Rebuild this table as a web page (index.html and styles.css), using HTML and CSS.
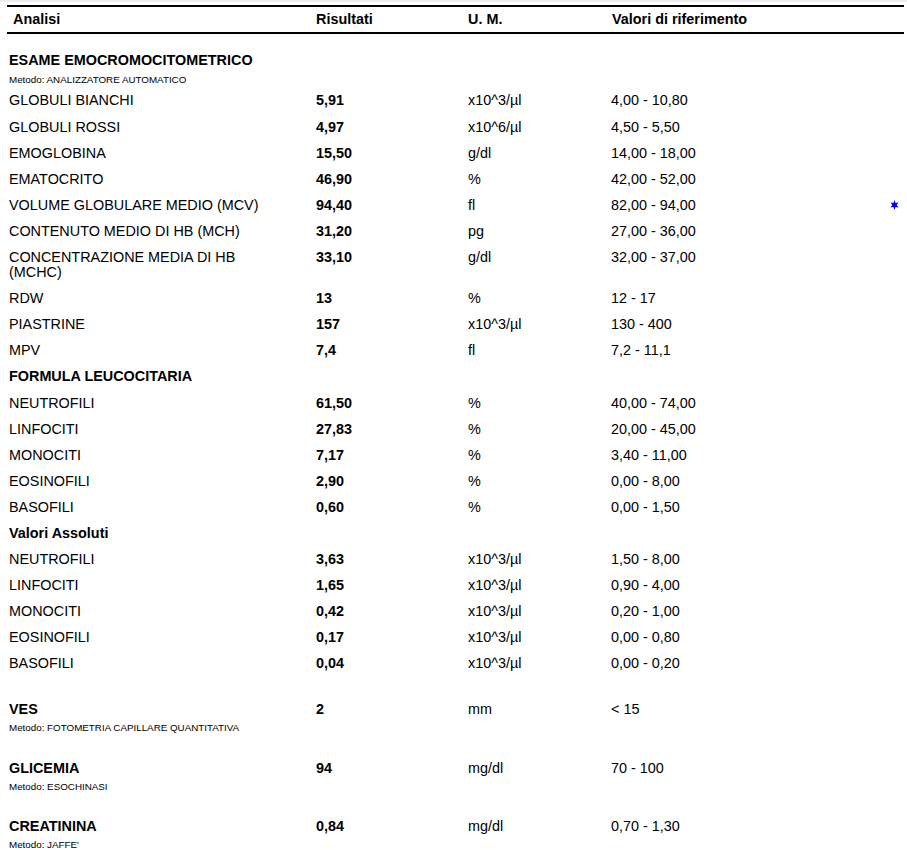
FILE: index.html
```html
<!DOCTYPE html>
<html lang="it">
<head>
<meta charset="utf-8">
<title>Referto</title>
<link rel="stylesheet" href="styles.css">
</head>
<body>
<div class="strip"></div>
<div class="head">
  <div class="h-name">Analisi</div>
  <div>Risultati</div>
  <div>U. M.</div>
  <div>Valori di riferimento</div>
</div>

<div class="report">
  <div class="section-title first">ESAME EMOCROMOCITOMETRICO</div>
  <div class="method">Metodo: ANALIZZATORE AUTOMATICO</div>

  <div class="row"><div class="name">GLOBULI BIANCHI</div><div class="res">5,91</div><div>x10^3/µl</div><div>4,00 - 10,80</div><div></div></div>
  <div class="row"><div class="name">GLOBULI ROSSI</div><div class="res">4,97</div><div>x10^6/µl</div><div>4,50 - 5,50</div><div></div></div>
  <div class="row"><div class="name">EMOGLOBINA</div><div class="res">15,50</div><div>g/dl</div><div>14,00 - 18,00</div><div></div></div>
  <div class="row"><div class="name">EMATOCRITO</div><div class="res">46,90</div><div>%</div><div>42,00 - 52,00</div><div></div></div>
  <div class="row"><div class="name">VOLUME GLOBULARE MEDIO (MCV)</div><div class="res">94,40</div><div>fl</div><div>82,00 - 94,00</div><div class="flag"><svg width="9" height="10" viewBox="0 0 9 10"><polygon points="4.5,0 5.6,3 8.5,2.6 6.7,5 8.5,7.4 5.6,7 4.5,10 3.4,7 0.5,7.4 2.3,5 0.5,2.6 3.4,3" fill="#0000ff"/></svg></div></div>
  <div class="row"><div class="name">CONTENUTO MEDIO DI HB (MCH)</div><div class="res">31,20</div><div>pg</div><div>27,00 - 36,00</div><div></div></div>
  <div class="row"><div class="name">CONCENTRAZIONE MEDIA DI HB (MCHC)</div><div class="res">33,10</div><div>g/dl</div><div>32,00 - 37,00</div><div></div></div>
  <div class="row"><div class="name">RDW</div><div class="res">13</div><div>%</div><div>12 - 17</div><div></div></div>
  <div class="row"><div class="name">PIASTRINE</div><div class="res">157</div><div>x10^3/µl</div><div>130 - 400</div><div></div></div>
  <div class="row"><div class="name">MPV</div><div class="res">7,4</div><div>fl</div><div>7,2 - 11,1</div><div></div></div>

  <div class="row"><div class="name bold">FORMULA LEUCOCITARIA</div></div>
  <div class="row"><div class="name">NEUTROFILI</div><div class="res">61,50</div><div>%</div><div>40,00 - 74,00</div><div></div></div>
  <div class="row"><div class="name">LINFOCITI</div><div class="res">27,83</div><div>%</div><div>20,00 - 45,00</div><div></div></div>
  <div class="row"><div class="name">MONOCITI</div><div class="res">7,17</div><div>%</div><div>3,40 - 11,00</div><div></div></div>
  <div class="row"><div class="name">EOSINOFILI</div><div class="res">2,90</div><div>%</div><div>0,00 - 8,00</div><div></div></div>
  <div class="row"><div class="name">BASOFILI</div><div class="res">0,60</div><div>%</div><div>0,00 - 1,50</div><div></div></div>

  <div class="row"><div class="name bold">Valori Assoluti</div></div>
  <div class="row"><div class="name">NEUTROFILI</div><div class="res">3,63</div><div>x10^3/µl</div><div>1,50 - 8,00</div><div></div></div>
  <div class="row"><div class="name">LINFOCITI</div><div class="res">1,65</div><div>x10^3/µl</div><div>0,90 - 4,00</div><div></div></div>
  <div class="row"><div class="name">MONOCITI</div><div class="res">0,42</div><div>x10^3/µl</div><div>0,20 - 1,00</div><div></div></div>
  <div class="row"><div class="name">EOSINOFILI</div><div class="res">0,17</div><div>x10^3/µl</div><div>0,00 - 0,80</div><div></div></div>
  <div class="row"><div class="name">BASOFILI</div><div class="res">0,04</div><div>x10^3/µl</div><div>0,00 - 0,20</div><div></div></div>

  <div class="test">
    <div class="name"><div class="test-title">VES</div><div class="method">Metodo: FOTOMETRIA CAPILLARE QUANTITATIVA</div></div>
    <div class="res">2</div><div class="unit-sm">mm</div><div class="unit-sm">&lt; 15</div><div></div>
  </div>
  <div class="test">
    <div class="name"><div class="test-title">GLICEMIA</div><div class="method">Metodo: ESOCHINASI</div></div>
    <div class="res">94</div><div class="unit-sm">mg/dl</div><div class="unit-sm">70 - 100</div><div></div>
  </div>
  <div class="test">
    <div class="name"><div class="test-title">CREATININA</div><div class="method">Metodo: JAFFE'</div></div>
    <div class="res">0,84</div><div class="unit-sm">mg/dl</div><div class="unit-sm">0,70 - 1,30</div><div></div>
  </div>
</div>
</body>
</html>
```

FILE: styles.css
```css
html, body {
  margin: 0;
  padding: 0;
  background: #ffffff;
}

body {
  font-family: "Liberation Sans", Arial, sans-serif;
  font-size: 14.4px;
  line-height: 15px;
  color: #000000;
}

.strip {
  height: 2px;
  background: #ededed;
  margin-bottom: 3px;
}

.head {
  margin-left: 7px;
  width: 897px;
  border-top: 2px solid #000;
  border-bottom: 2px solid #000;
  padding: 5px 0;
  display: grid;
  grid-template-columns: 309px 152px 144px 1fr;
  font-weight: bold;
}

.h-name {
  padding-left: 6px;
}

.report {
  padding-left: 9px;
}

.section-title {
  font-weight: bold;
}

.section-title.first {
  margin-top: 18.5px;
}

.method {
  font-size: 9.8px;
  line-height: 11px;
  margin-top: 6px;
  margin-bottom: 3.4px;
}

.row {
  display: grid;
  grid-template-columns: 307px 152px 143px 279px 9px;
  padding: 5.6px 0 5.5px;
}

.name {
  padding-right: 30px;
}

.bold,
.res,
.test-title {
  font-weight: bold;
}

.flag {
  display: flex;
  align-items: center;
}

.test {
  display: grid;
  grid-template-columns: 307px 152px 143px 279px 9px;
  margin-top: 25.5px;
}

.test + .test {
  margin-top: 27.5px;
}

.test .method {
  margin-top: 5px;
  margin-bottom: 0;
}
```
